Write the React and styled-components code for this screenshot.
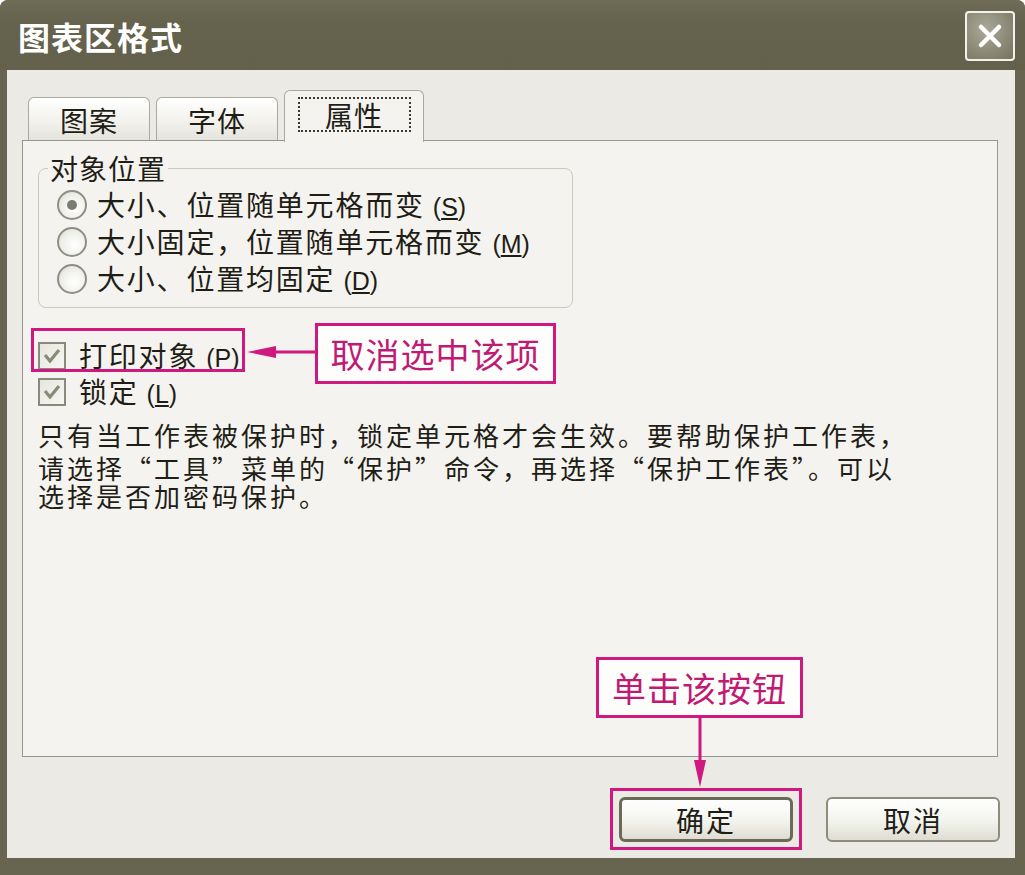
import styled, { createGlobalStyle } from "styled-components";

const GlobalStyle = createGlobalStyle`
  html, body {
    margin: 0;
    padding: 0;
    background: #ffffff;
  }
  body {
    font-family: "Noto Sans CJK SC", "Noto Sans", sans-serif;
  }
`;

const MAGENTA = "#d0197f";

const radios = [
  { label: "大小、位置随单元格而变", key: "S", checked: true },
  { label: "大小固定，位置随单元格而变", key: "M" },
  { label: "大小、位置均固定", key: "D" },
];

const checks = [
  { label: "打印对象", key: "P" },
  { label: "锁定", key: "L" },
];

const tabs = [
  { label: "图案", width: 122 },
  { label: "字体", width: 122 },
  { label: "属性", width: 140, active: true },
];

function Hotkey({ k }) {
  return (
    <Key>
      (<u>{k}</u>)
    </Key>
  );
}

export default function App() {
  return (
    <>
      <GlobalStyle />
      <Window>
        <TitleBar>
          <Title>图表区格式</Title>
          <CloseButton aria-label="关闭">
            <svg width="30" height="30" viewBox="0 0 30 30">
              <path
                d="M6 6 L24 24 M24 6 L6 24"
                stroke="#ffffff"
                strokeWidth="4.5"
                strokeLinecap="round"
              />
            </svg>
          </CloseButton>
        </TitleBar>

        <Body>
          <TabStrip>
            {tabs.map((t) => (
              <Tab key={t.label} $active={t.active} $width={t.width}>
                {t.active ? <Focus>{t.label}</Focus> : t.label}
              </Tab>
            ))}
          </TabStrip>

          <Panel>
            <Group>
              <Legend>对象位置</Legend>
              <RadioList>
                {radios.map((r) => (
                  <Row key={r.key}>
                    <Radio $checked={r.checked} />
                    <Label>
                      {r.label}
                      <Hotkey k={r.key} />
                    </Label>
                  </Row>
                ))}
              </RadioList>
            </Group>

            <CheckList>
              {checks.map((c) => (
                <CheckRow key={c.key}>
                  <CheckBox>
                    <svg width="20" height="18" viewBox="0 0 20 18">
                      <path
                        d="M3 8 L8 14 L17 3"
                        fill="none"
                        stroke="#8a8a78"
                        strokeWidth="3.2"
                      />
                    </svg>
                  </CheckBox>
                  <Label>
                    {c.label}
                    <Hotkey k={c.key} />
                  </Label>
                </CheckRow>
              ))}
            </CheckList>

            <Note>
              <FirstLine>
                只有当工作表被保护时，锁定单元格才会生效。要帮助保护工作表，
              </FirstLine>
              <NoteLine>
                请选择“工具”菜单的“保护”命令，再选择“保护工作表”。可以
              </NoteLine>
              <NoteLine>选择是否加密码保护。</NoteLine>
            </Note>
          </Panel>

          <Footer>
            <Button $default>确定</Button>
            <Button>取消</Button>
          </Footer>
        </Body>

        <Highlight style={{ left: 31, top: 328, width: 214, height: 44 }} />
        <Callout style={{ left: 315, top: 323, width: 241, height: 61 }}>
          取消选中该项
        </Callout>
        <Arrow style={{ left: 244, top: 340 }} width="72" height="24" viewBox="0 0 72 24">
          <line x1="30" y1="12" x2="72" y2="12" stroke={MAGENTA} strokeWidth="3" />
          <polygon points="3,12 32,6 32,18" fill={MAGENTA} />
        </Arrow>

        <Callout style={{ left: 596, top: 657, width: 207, height: 61 }}>
          单击该按钮
        </Callout>
        <Arrow style={{ left: 690, top: 718 }} width="20" height="70" viewBox="0 0 20 70">
          <line x1="10" y1="0" x2="10" y2="45" stroke={MAGENTA} strokeWidth="3" />
          <polygon points="10,69 4,42 16,42" fill={MAGENTA} />
        </Arrow>
        <Highlight style={{ left: 610, top: 788, width: 192, height: 62 }} />
      </Window>
    </>
  );
}

const Window = styled.div`
  position: relative;
  width: 1025px;
  height: 875px;
  display: flex;
  flex-direction: column;
  background: #67654f;
  border-radius: 8px 8px 0 0;
  overflow: hidden;
  color: #1f1e16;
`;

const TitleBar = styled.div`
  height: 70px;
  flex: none;
  display: flex;
  align-items: center;
  justify-content: space-between;
  padding: 0 10px 0 18px;
  box-sizing: border-box;
  background: linear-gradient(#6f6d57, #65634d 30%, #63614b);
`;

const Title = styled.div`
  color: #ffffff;
  font-size: 32px;
  font-weight: 700;
  letter-spacing: 1px;
  line-height: 1;
  margin-top: 2px;
`;

const CloseButton = styled.div`
  width: 50px;
  height: 50px;
  box-sizing: border-box;
  border: 2px solid #f2f2ea;
  border-radius: 4px;
  background: radial-gradient(circle at 40% 35%, #aaa898, #85836f 70%, #76745f);
  display: flex;
  align-items: center;
  justify-content: center;
  margin-top: 2px;
`;

const Body = styled.div`
  flex: 1;
  margin: 0 10px 17px 7px;
  padding: 20px 17px 16px 15px;
  background: #ebeae4;
  display: flex;
  flex-direction: column;
  min-height: 0;
`;

const TabStrip = styled.div`
  height: 50px;
  display: flex;
  align-items: flex-end;
  padding-left: 6px;
  gap: 6px;
  position: relative;
  z-index: 1;
`;

const Tab = styled.div`
  width: ${(p) => p.$width}px;
  height: ${(p) => (p.$active ? 52 : 43)}px;
  margin-bottom: ${(p) => (p.$active ? -2 : 0)}px;
  box-sizing: border-box;
  border: 1px solid #a9a99e;
  border-bottom: none;
  border-radius: 6px 6px 0 0;
  background: ${(p) =>
    p.$active ? "#f4f3ef" : "linear-gradient(#ffffff, #f1f0ea 60%, #e4e3dc)"};
  display: flex;
  align-items: center;
  justify-content: center;
  font-size: 28px;
  letter-spacing: 1px;
  padding-top: ${(p) => (p.$active ? 0 : 2)}px;
`;

const Focus = styled.span`
  width: 113px;
  height: 35px;
  box-sizing: border-box;
  border: 2px dotted #3a3a30;
  display: flex;
  align-items: center;
  justify-content: center;
  margin-bottom: 4px;
`;

const Panel = styled.div`
  height: 617px;
  flex: none;
  box-sizing: border-box;
  border: 1px solid #96968a;
  background: #f4f3ef;
  padding: 12px 15px 0;
`;

const Group = styled.fieldset`
  width: 535px;
  box-sizing: border-box;
  margin: 0;
  padding: 0 0 10px 18px;
  border: 1px solid #c9c9bd;
  border-radius: 8px;
`;

const Legend = styled.legend`
  font-size: 28px;
  line-height: 30px;
  letter-spacing: 1px;
  padding: 0 2px;
  margin-left: -9px;
`;

const RadioList = styled.div`
  display: flex;
  flex-direction: column;
  margin-top: 3px;
`;

const Row = styled.div`
  height: 37px;
  display: flex;
  align-items: center;
  gap: 10px;
`;

const Radio = styled.span`
  width: 30px;
  height: 30px;
  box-sizing: border-box;
  border-radius: 50%;
  border: 2px solid #8e8e84;
  background: radial-gradient(circle at 60% 60%, #ffffff, #eeeee8 60%, #d6d6ce);
  display: flex;
  align-items: center;
  justify-content: center;

  &::after {
    content: "";
    width: 10px;
    height: 10px;
    border-radius: 50%;
    background: ${(p) => (p.$checked ? "#7c7c70" : "transparent")};
  }
`;

const Label = styled.span`
  font-size: 28px;
  letter-spacing: 1.8px;
  line-height: 1;
  white-space: nowrap;
`;

const Key = styled.span`
  margin-left: 8px;
  font-family: "Liberation Sans", "Noto Sans", sans-serif;
  font-size: 25px;
  letter-spacing: 0;

  u {
    text-underline-offset: 2px;
  }
`;

const CheckList = styled.div`
  margin-top: 30px;
  display: flex;
  flex-direction: column;
`;

const CheckRow = styled.div`
  height: 36px;
  display: flex;
  align-items: center;
  gap: 13px;
`;

const CheckBox = styled.span`
  width: 28px;
  height: 28px;
  box-sizing: border-box;
  border: 2px solid #8a8a7c;
  background: linear-gradient(135deg, #e6e6df, #f7f7f2);
  display: flex;
  align-items: center;
  justify-content: center;
`;

const Note = styled.div`
  margin-top: 10px;
  font-size: 26px;
  letter-spacing: 3px;
  white-space: nowrap;
`;

const FirstLine = styled.div`
  line-height: 30px;
  margin-bottom: 4px;
`;

const NoteLine = styled.div`
  line-height: 28px;
`;

const Footer = styled.div`
  margin-top: 40px;
  display: flex;
  justify-content: flex-end;
  gap: 33px;
  margin-right: -2px;
`;

const Button = styled.div`
  width: 174px;
  height: 45px;
  box-sizing: border-box;
  border-radius: 6px;
  border: ${(p) => (p.$default ? "3px solid #6b6a58" : "2px solid #8e8d7c")};
  background: linear-gradient(#ffffff, #f3f3ee 55%, #dedcd2);
  display: flex;
  align-items: center;
  justify-content: center;
  font-size: 28px;
  letter-spacing: 2px;
`;

const Highlight = styled.div`
  position: absolute;
  box-sizing: border-box;
  border: 3px solid ${MAGENTA};
  pointer-events: none;
`;

const Callout = styled.div`
  position: absolute;
  box-sizing: border-box;
  border: 3px solid ${MAGENTA};
  background: #fdfdfb;
  color: #c01a74;
  font-size: 34px;
  letter-spacing: 1px;
  display: flex;
  align-items: center;
  justify-content: center;
`;

const Arrow = styled.svg`
  position: absolute;
  overflow: visible;
`;
